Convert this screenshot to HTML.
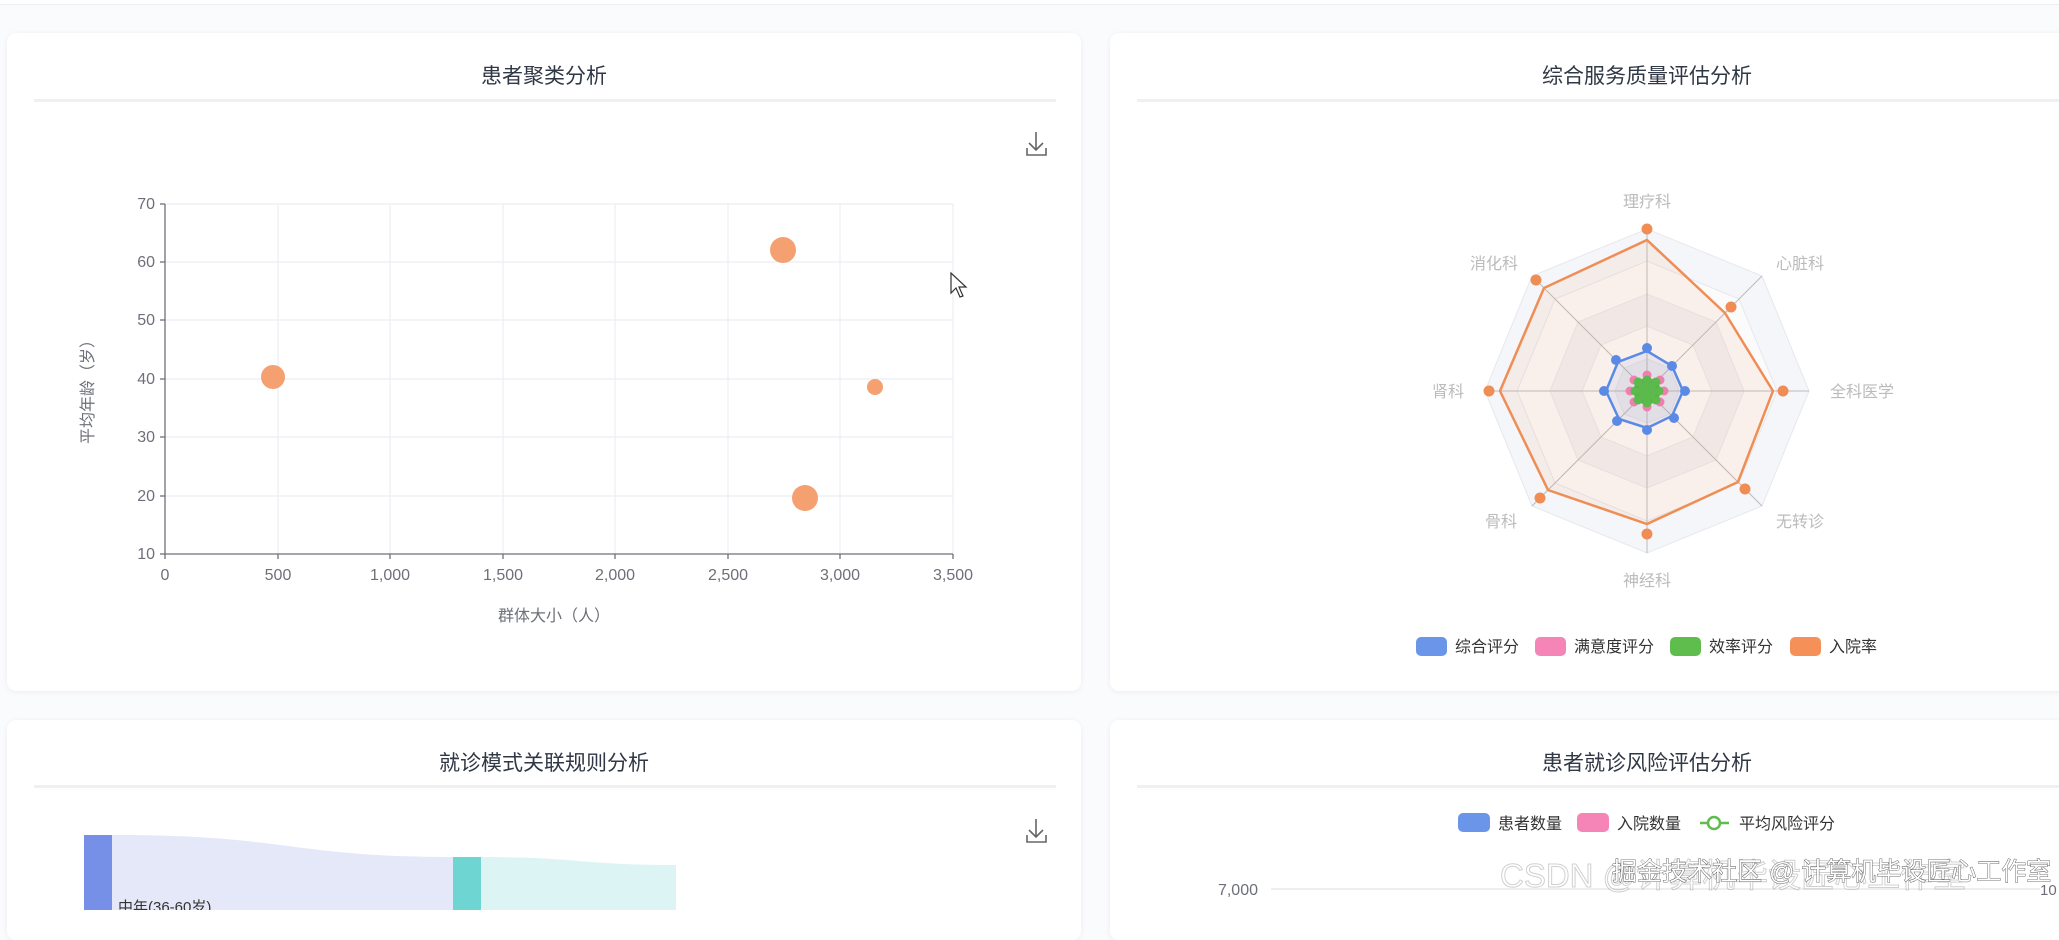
<!DOCTYPE html>
<html><head><meta charset="utf-8"><style>
html,body{margin:0;padding:0;width:2059px;height:910px;overflow:hidden;background:#fafbfc;font-family:"Liberation Sans","Noto Sans CJK SC",sans-serif;}
.card{position:absolute;background:#fff;border-radius:9px;box-shadow:0 1px 6px rgba(0,0,0,0.06);}
.t{position:absolute;left:0;right:0;text-align:center;font-size:21px;color:#303845;}
.d{position:absolute;height:3px;background:#eef0f3;}
svg{position:absolute;left:0;top:0;}
</style></head><body>
<div style="position:absolute;left:0;top:0;width:2059px;height:4px;border-bottom:1px solid #eceef1;background:#fff"></div>
<div class="card" style="left:7px;top:33px;width:1074px;height:658px"><div class="t" style="top:27px">患者聚类分析</div><div class="d" style="left:27px;width:1022px;top:66px"></div></div>
<div class="card" style="left:1110px;top:33px;width:960px;height:658px"><div class="t" style="top:27px;width:1074px;right:auto">综合服务质量评估分析</div><div class="d" style="left:27px;width:940px;top:66px"></div></div>
<div class="card" style="left:7px;top:720px;width:1074px;height:220px"><div class="t" style="top:27px">就诊模式关联规则分析</div><div class="d" style="left:27px;width:1022px;top:65px"></div></div>
<div class="card" style="left:1110px;top:720px;width:960px;height:220px"><div class="t" style="top:27px;width:1074px;right:auto">患者就诊风险评估分析</div><div class="d" style="left:27px;width:940px;top:65px"></div></div>
<svg width="2059" height="910" viewBox="0 0 2059 910" font-family="Liberation Sans, Noto Sans CJK SC, sans-serif">
<g stroke="#eceef2" stroke-width="1.2">
<line x1="165" y1="204" x2="953" y2="204"/><line x1="165" y1="262" x2="953" y2="262"/><line x1="165" y1="320" x2="953" y2="320"/><line x1="165" y1="379" x2="953" y2="379"/><line x1="165" y1="437" x2="953" y2="437"/><line x1="165" y1="496" x2="953" y2="496"/>
<line x1="278" y1="204" x2="278" y2="554"/><line x1="390" y1="204" x2="390" y2="554"/><line x1="503" y1="204" x2="503" y2="554"/><line x1="615" y1="204" x2="615" y2="554"/><line x1="728" y1="204" x2="728" y2="554"/><line x1="840" y1="204" x2="840" y2="554"/><line x1="953" y1="204" x2="953" y2="554"/>
</g>
<g stroke="#6e7079" stroke-width="1.3">
<line x1="165" y1="204" x2="165" y2="554"/><line x1="165" y1="554" x2="953" y2="554"/>
<line x1="160" y1="204" x2="165" y2="204"/><line x1="160" y1="262" x2="165" y2="262"/><line x1="160" y1="320" x2="165" y2="320"/><line x1="160" y1="379" x2="165" y2="379"/><line x1="160" y1="437" x2="165" y2="437"/><line x1="160" y1="496" x2="165" y2="496"/><line x1="160" y1="554" x2="165" y2="554"/>
<line x1="165" y1="554" x2="165" y2="559"/><line x1="278" y1="554" x2="278" y2="559"/><line x1="390" y1="554" x2="390" y2="559"/><line x1="503" y1="554" x2="503" y2="559"/><line x1="615" y1="554" x2="615" y2="559"/><line x1="728" y1="554" x2="728" y2="559"/><line x1="840" y1="554" x2="840" y2="559"/><line x1="953" y1="554" x2="953" y2="559"/>
</g>
<g fill="#6e7079" font-size="16" text-anchor="end">
<text x="155" y="209">70</text><text x="155" y="267">60</text><text x="155" y="325">50</text><text x="155" y="384">40</text><text x="155" y="442">30</text><text x="155" y="501">20</text><text x="155" y="559">10</text>
</g>
<g fill="#6e7079" font-size="16" text-anchor="middle">
<text x="165" y="580">0</text><text x="278" y="580">500</text><text x="390" y="580">1,000</text><text x="503" y="580">1,500</text><text x="615" y="580">2,000</text><text x="728" y="580">2,500</text><text x="840" y="580">3,000</text><text x="953" y="580">3,500</text>
<text x="554" y="621">群体大小（人）</text>
<text transform="translate(93,388) rotate(-90)">平均年龄（岁）</text>
</g>
<g fill="#f4a070">
<circle cx="783" cy="250" r="13"/><circle cx="273" cy="377" r="12"/><circle cx="875" cy="387" r="8"/><circle cx="805" cy="498" r="13"/>
</g>
<g stroke="#666" stroke-width="1.6" fill="none">
<path d="M1036 132 V150 M1029 143 L1036 150 L1043 143 M1027 148 V155 H1046 V148"/>
<path d="M1036 819 V837 M1029 830 L1036 837 L1043 830 M1027 835 V842 H1046 V835"/>
</g>
<path d="M951 273 L951 293 L956 288 L960 297 L963 296 L959 287 L966 287 Z" fill="#fff" stroke="#333" stroke-width="1.2"/>
<polygon points="1647,229 1762,276 1809,391 1762,506 1647,553 1532,506 1485,391 1532,276" fill="#f4f6fa" stroke="#e6e8ee"/>
<polygon points="1647,261 1739,299 1777,391 1739,483 1647,521 1555,483 1517,391 1555,299" fill="#fbfbfc" stroke="#e6e8ee"/>
<polygon points="1647,294 1716,322 1744,391 1716,460 1647,488 1578,460 1550,391 1578,322" fill="#f1f2f6" stroke="#e6e8ee"/>
<polygon points="1647,326 1693,345 1712,391 1693,437 1647,456 1601,437 1582,391 1601,345" fill="#fbfbfc" stroke="#e6e8ee"/>
<polygon points="1647,359 1670,368 1679,391 1670,414 1647,423 1624,414 1615,391 1624,368" fill="#f1f2f6" stroke="#e6e8ee"/>
<g stroke="#bbb" stroke-width="1"><line x1="1647" y1="229" x2="1647" y2="553"/><line x1="1485" y1="391" x2="1809" y2="391"/><line x1="1532" y1="276" x2="1762" y2="506"/><line x1="1762" y1="276" x2="1532" y2="506"/></g>
<polygon points="1647,240 1725,313 1773,391 1738,482 1647,524 1548,490 1500,391 1544,288" fill="rgba(248,150,90,0.1)" stroke="#ef8d55" stroke-width="2.5"/>
<g fill="#ef8d55"><circle cx="1647" cy="229" r="5.5"/><circle cx="1731" cy="307" r="5.5"/><circle cx="1783" cy="391" r="5.5"/><circle cx="1745" cy="489" r="5.5"/><circle cx="1647" cy="534" r="5.5"/><circle cx="1540" cy="498" r="5.5"/><circle cx="1489" cy="391" r="5.5"/><circle cx="1536" cy="280" r="5.5"/></g>
<polygon points="1647,351 1672,366 1683,391 1672,416 1647,428 1619,419 1606,391 1618,362" fill="rgba(100,140,230,0.1)" stroke="#5b8ae6" stroke-width="2.5"/>
<g fill="#5b8ae6"><circle cx="1647" cy="348" r="5"/><circle cx="1672" cy="366" r="5"/><circle cx="1685" cy="391" r="5"/><circle cx="1674" cy="418" r="5"/><circle cx="1647" cy="430" r="5"/><circle cx="1617" cy="421" r="5"/><circle cx="1604" cy="391" r="5"/><circle cx="1616" cy="360" r="5"/></g>
<g fill="#f07fb0"><circle cx="1647" cy="375" r="4.5"/><circle cx="1660" cy="380" r="4.5"/><circle cx="1664" cy="391" r="4.5"/><circle cx="1660" cy="402" r="4.5"/><circle cx="1647" cy="407" r="4.5"/><circle cx="1634" cy="402" r="4.5"/><circle cx="1630" cy="391" r="4.5"/><circle cx="1634" cy="380" r="4.5"/></g>
<polygon points="1647,380 1656,382 1659,391 1656,400 1647,403 1638,400 1635,391 1638,382" fill="#5cb94c" stroke="#4cae3c" stroke-width="4"/>
<g fill="#5cb94c"><circle cx="1647" cy="380" r="4.5"/><circle cx="1656" cy="382" r="4.5"/><circle cx="1659" cy="391" r="4.5"/><circle cx="1656" cy="400" r="4.5"/><circle cx="1647" cy="403" r="4.5"/><circle cx="1638" cy="400" r="4.5"/><circle cx="1635" cy="391" r="4.5"/><circle cx="1638" cy="382" r="4.5"/></g>
<g fill="#bbb" font-size="16" text-anchor="middle">
<text x="1647" y="207">理疗科</text><text x="1800" y="269">心脏科</text><text x="1830" y="397" text-anchor="start">全科医学</text><text x="1800" y="527">无转诊</text><text x="1647" y="586">神经科</text><text x="1501" y="527">骨科</text><text x="1448" y="397">肾科</text><text x="1494" y="269">消化科</text>
</g>
<g font-size="16" fill="#333">
<rect x="1416" y="637" width="31" height="19" rx="5" fill="#6b95e8"/><text x="1455" y="652">综合评分</text>
<rect x="1535" y="637" width="31" height="19" rx="5" fill="#f585b6"/><text x="1574" y="652">满意度评分</text>
<rect x="1670" y="637" width="31" height="19" rx="5" fill="#5fbd4e"/><text x="1709" y="652">效率评分</text>
<rect x="1790" y="637" width="31" height="19" rx="5" fill="#f59058"/><text x="1829" y="652">入院率</text>
</g>
<path d="M112 835 C290 835 290 857 453 857 L453 910 L112 910 Z" fill="#e4e8f8"/>
<rect x="84" y="835" width="28" height="80" fill="#7590e6"/>
<path d="M481 857 C580 857 580 865 676 865 L676 910 L481 910 Z" fill="#dcf4f3"/>
<rect x="453" y="857" width="28" height="60" fill="#6fd5d2"/>
<text x="118" y="912" font-size="15" fill="#333">中年(36-60岁)</text>
<g font-size="16" fill="#333">
<rect x="1458" y="813" width="32" height="19" rx="5" fill="#6b95e8"/><text x="1498" y="829">患者数量</text>
<rect x="1577" y="813" width="32" height="19" rx="5" fill="#f585b6"/><text x="1617" y="829">入院数量</text>
<line x1="1700" y1="823" x2="1729" y2="823" stroke="#5fbd4e" stroke-width="2.5"/><circle cx="1714" cy="823" r="6" fill="#fff" stroke="#5fbd4e" stroke-width="2.5"/><text x="1739" y="829">平均风险评分</text>
</g>
<line x1="1271" y1="889" x2="2040" y2="889" stroke="#e6e8ec" stroke-width="1.5"/>
<text x="1258" y="895" font-size="16" fill="#6e7079" text-anchor="end">7,000</text>
<text x="2040" y="895" font-size="15" fill="#6e7079">10</text>
<text x="1500" y="887" font-size="33" fill="rgba(255,255,255,0.6)" stroke="rgba(120,120,120,0.35)" stroke-width="1">CSDN @计算机毕设匠心工作室</text>
<text x="1612" y="880" font-size="25" fill="#fff" stroke="#444" stroke-width="0.8" paint-order="stroke">掘金技术社区 @ 计算机毕设匠心工作室</text>
</svg>
</body></html>
